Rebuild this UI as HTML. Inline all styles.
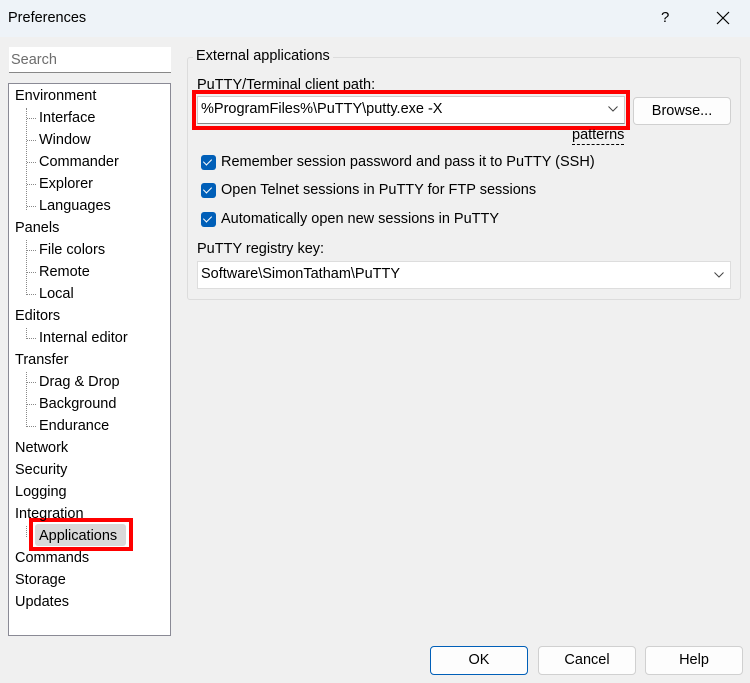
<!DOCTYPE html>
<html><head><style>
*{margin:0;padding:0;box-sizing:border-box}
body{width:750px;height:683px;background:#f0f0f0;font-family:"Liberation Sans",sans-serif;font-size:14.5px;color:#000;position:relative;overflow:hidden}
.a{position:absolute;white-space:nowrap}
.tree div{position:absolute;white-space:nowrap;line-height:22px}
.btn{position:absolute;background:#fdfdfd;border:1px solid #d0d0d0;border-radius:4px;text-align:center;line-height:26px}
.cb{position:absolute;width:15px;height:15px;background:#005fb8;border-radius:3px}
.cb:after{content:"";position:absolute;left:4px;top:2px;width:4px;height:7px;border:solid #fff;border-width:0 1.5px 1.5px 0;transform:rotate(45deg)}
.dl{position:absolute;border-left:1px dotted #888}
.dh{position:absolute;border-top:1px dotted #888;width:9px}
</style></head><body>
<div class="a" style="left:0;top:0;width:750px;height:37px;background:#eef3f8"></div>
<div class="a" style="left:8px;top:10px;font-size:14.5px">Preferences</div>
<div class="a" style="left:661px;top:9px;font-size:15px">?</div>
<svg class="a" style="left:716px;top:11px" width="14" height="14"><path d="M1 1L13 13M13 1L1 13" stroke="#000" stroke-width="1.2"/></svg>

<div class="a" style="left:9px;top:47px;width:162px;height:26px;background:#fff;border-bottom:1px solid #888"></div>
<div class="a" style="left:11px;top:52px;color:#6d6d6d">Search</div>

<div class="a" style="left:8px;top:83px;width:163px;height:553px;background:#fff;border:1px solid #8a8a95"></div>
<div class="dl" style="left:26px;top:108px;height:102px"></div>
<div class="dl" style="left:26px;top:240px;height:55px"></div>
<div class="dl" style="left:26px;top:328px;height:11px"></div>
<div class="dl" style="left:26px;top:372px;height:55px"></div>
<div class="dl" style="left:26px;top:526px;height:11px"></div>
<div class="a" style="left:35px;top:524px;width:91px;height:22px;background:#d9d9d9;border-radius:3px"></div>
<div class="a" style="left:29px;top:518px;width:104px;height:33px;border:4px solid #f00"></div>
<div class="tree">
<div style="left:15px;top:85px">Environment</div>
<div style="left:39px;top:107px">Interface</div>
<div style="left:39px;top:129px">Window</div>
<div style="left:39px;top:151px">Commander</div>
<div style="left:39px;top:173px">Explorer</div>
<div style="left:39px;top:195px">Languages</div>
<div style="left:15px;top:217px">Panels</div>
<div style="left:39px;top:239px">File colors</div>
<div style="left:39px;top:261px">Remote</div>
<div style="left:39px;top:283px">Local</div>
<div style="left:15px;top:305px">Editors</div>
<div style="left:39px;top:327px">Internal editor</div>
<div style="left:15px;top:349px">Transfer</div>
<div style="left:39px;top:371px">Drag &amp; Drop</div>
<div style="left:39px;top:393px">Background</div>
<div style="left:39px;top:415px">Endurance</div>
<div style="left:15px;top:437px">Network</div>
<div style="left:15px;top:459px">Security</div>
<div style="left:15px;top:481px">Logging</div>
<div style="left:15px;top:503px">Integration</div>
<div style="left:39px;top:525px">Applications</div>
<div style="left:15px;top:547px">Commands</div>
<div style="left:15px;top:569px">Storage</div>
<div style="left:15px;top:591px">Updates</div>
</div>
<div class="dh" style="left:27px;top:118px"></div><div class="dh" style="left:27px;top:140px"></div><div class="dh" style="left:27px;top:162px"></div><div class="dh" style="left:27px;top:184px"></div><div class="dh" style="left:27px;top:206px"></div>
<div class="dh" style="left:27px;top:250px"></div><div class="dh" style="left:27px;top:272px"></div><div class="dh" style="left:27px;top:294px"></div>
<div class="dh" style="left:27px;top:338px"></div>
<div class="dh" style="left:27px;top:382px"></div><div class="dh" style="left:27px;top:404px"></div><div class="dh" style="left:27px;top:426px"></div>

<div class="a" style="left:187px;top:57px;width:554px;height:243px;border:1px solid #dcdcdc;border-radius:3px"></div>
<div class="a" style="left:193px;top:48px;padding:0 3px;background:#f0f0f0">External applications</div>
<div class="a" style="left:197px;top:77px">PuTTY/Terminal client path:</div>
<div class="a" style="left:192px;top:90px;width:438px;height:40px;border:4px solid #f00"></div>
<div class="a" style="left:197px;top:96px;width:428px;height:28px;background:#fff;border:1px solid #ccc;border-bottom-color:#888"></div>
<div class="a" style="left:201px;top:101px">%ProgramFiles%\PuTTY\putty.exe -X</div>
<svg class="a" style="left:608px;top:106px" width="10" height="6"><path d="M0.5 0.5L5 5L9.5 0.5" stroke="#444" fill="none"/></svg>
<div class="btn" style="left:633px;top:97px;width:98px;height:28px">Browse...</div>
<div class="a" style="left:572px;top:127px;border-bottom:1px dashed #000;line-height:17px">patterns</div>
<div class="cb" style="left:201px;top:155px"></div><div class="a" style="left:221px;top:154px">Remember session password and pass it to PuTTY (SSH)</div>
<div class="cb" style="left:201px;top:183px"></div><div class="a" style="left:221px;top:182px">Open Telnet sessions in PuTTY for FTP sessions</div>
<div class="cb" style="left:201px;top:212px"></div><div class="a" style="left:221px;top:211px">Automatically open new sessions in PuTTY</div>
<div class="a" style="left:197px;top:241px">PuTTY registry key:</div>
<div class="a" style="left:197px;top:261px;width:534px;height:28px;background:#fff;border:1px solid #ddd"></div>
<div class="a" style="left:201px;top:266px">Software\SimonTatham\PuTTY</div>
<svg class="a" style="left:714px;top:272px" width="10" height="6"><path d="M0.5 0.5L5 5L9.5 0.5" stroke="#444" fill="none"/></svg>

<div class="btn" style="left:430px;top:646px;width:98px;height:29px;border-color:#005fb8">OK</div>
<div class="btn" style="left:538px;top:646px;width:98px;height:29px">Cancel</div>
<div class="btn" style="left:645px;top:646px;width:98px;height:29px">Help</div>
</body></html>
